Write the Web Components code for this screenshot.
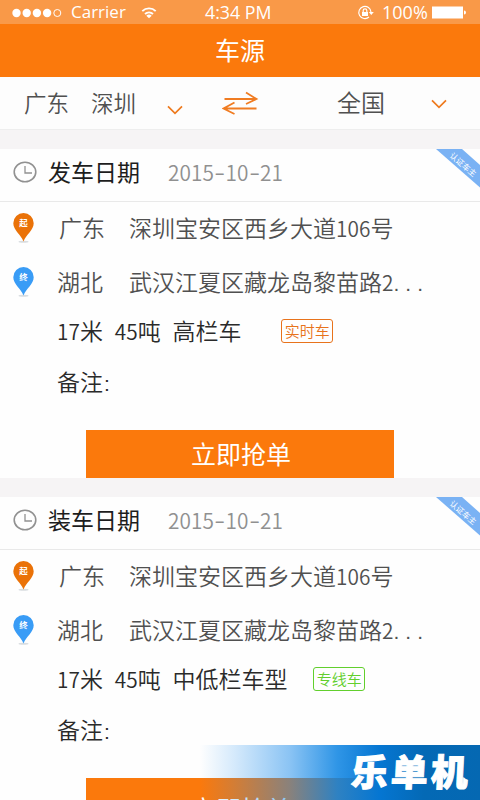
<!DOCTYPE html>
<html lang="zh-CN">
<head>
<meta charset="utf-8">
<title>车源</title>
<style>
html,body{margin:0;height:100%;overflow:hidden;background:#f6f5f6}
body{font-family:"Noto Sans CJK SC",sans-serif;font-weight:350;color:#505050}
</style>
</head>
<body>
<truck-app></truck-app>
<script>
const define = (name, render) => customElements.define(name, class extends HTMLElement {
  connectedCallback() {
    if (this.shadowRoot) return;
    this.attachShadow({mode: 'open'}).innerHTML = render(this);
  }
});

/* Text in which latin characters take half of a CJK cell. */
define('cell-text', el => {
  const html = el.getAttribute('value').replace(/\.\.\.|[0-9]+|-|:| /g, m =>
    m === '...' ? '<span class="dots">...</span>' :
    m === '-' ? '<span class="dash">-</span>' :
    m === ':' ? '<span class="colon">:</span>' :
    m === ' ' ? '<span class="sp"> </span>' : `<span class="n">${m}</span>`);
  return `<style>
  :host{display:block;white-space:pre;font-size:23px;line-height:34px;padding-bottom:2px}
  span{font-family:"Liberation Sans",sans-serif;font-size:21px;line-height:1}
  .n{font-family:"Noto Sans CJK SC",sans-serif;font-size:20.8px;letter-spacing:.1px}
  .dash{display:inline-block;width:11.4px;text-align:center;transform:scaleX(1.55) translateY(-1px)}
  .dots{letter-spacing:6px}
  .colon{padding-left:1px}
  .sp{letter-spacing:5.8px}
  </style>${html}`;
});

define('status-bar', () => `<style>
  :host{display:flex;flex:none;height:24px;box-sizing:border-box;align-items:center;background:#f99948;color:#fff;font:400 17px/24px "Open Sans",sans-serif;padding:0 11px 0 12px}
  svg,span{display:block;flex:none;white-space:nowrap}
  .carrier{margin-left:9px;width:70px}.wifi{width:64px}.time{width:152px;font-size:17.8px}
  .pct{margin-left:7px;width:48px;font-size:18px}
  </style>
  <svg width="50" height="24" fill="#fff"><circle cx="4.5" cy="13" r="4.2"/><circle cx="14.7" cy="13" r="4.2"/><circle cx="24.9" cy="13" r="4.2"/><circle cx="35.1" cy="13" r="4.2"/><circle cx="45.3" cy="13" r="3.5" fill="none" stroke="#fff"/></svg>
  <span class="carrier">Carrier</span>
  <svg class="wifi" width="64" height="24" viewBox="0 0 64 24" fill="none" stroke="#fff" stroke-width="1.9"><path d="M1.3 11.1a9.6 9.6 0 0 1 13.4 0M4 14a6 6 0 0 1 8 0"/><path d="M8 18.2 5.3 15.8a4 4 0 0 1 5.4 0Z" fill="#fff" stroke="none"/></svg>
  <span class="time">4:34 PM</span>
  <svg width="18" height="24" fill="none" stroke="#fff" stroke-width="1.2"><path d="M14 12.2A6.1 6.1 0 1 0 12 17"/><path d="M11.8 12h5l-2.5 3Z" fill="#fff" stroke="none"/><path d="M5 12h6v4H5z" fill="#fff" stroke="none"/><path d="M6.2 12v-1.4a1.8 1.8 0 0 1 3.6 0V12"/></svg>
  <span class="pct">100%</span>
  <svg width="36" height="24" fill="#fff"><rect x="2" y="6.5" width="31" height="12"/><path d="M34 10.5q2 0 2 2t-2 2z"/></svg>`);

define('title-bar', () => `<style>
  :host{display:flex;flex:none;height:53px;background:#fb790c;color:#fff;align-items:center;justify-content:center;font-size:25px;font-weight:400;line-height:36px;box-sizing:border-box;padding-bottom:4px}
  </style><slot></slot>`);

define('chevron-icon', () => `<style>:host{display:block}svg{display:block}</style>
  <svg width="16" height="10" fill="none" stroke="#ee7a1e" stroke-width="1.7"><path d="m1 1.3 7 7 7-7"/></svg>`);

define('filter-bar', () => `<style>
  :host{display:flex;flex:none;align-items:center;height:53px;box-sizing:border-box;background:#fdfdfd;border-bottom:1px solid #eeeeee;padding:0 32px 0 24px;font-size:22.5px;line-height:34px}
  span,svg,chevron-icon{flex:none}
  span{white-space:nowrap;padding-bottom:2px}.a{width:67px}.b{width:76px}.all{width:94px;font-size:24px}
  .c1{padding-top:14px;width:55px}.sw{display:block}.c2{padding-top:2px}
  </style>
  <span class="a">广东</span><span class="b">深圳</span><chevron-icon class="c1"></chevron-icon>
  <svg class="sw" width="115" height="26" viewBox="0 0 115 26" fill="none" stroke="#f07c22" stroke-width="1.8"><path d="M2.5 9H34.5M24 2.5 34.5 9 24 14M34.5 18.5H1.5M12.5 12.5 1.5 18.5l11 5.5"/></svg>
  <span class="all">全国</span><chevron-icon class="c2"></chevron-icon>`);

define('map-pin', el => `<style>:host{display:block;width:21px;height:30px}svg{display:block}text{font:bold 8.5px "Noto Sans CJK SC",sans-serif;fill:#fff}</style>
  <svg width="21" height="30"><ellipse cx="10.5" cy="28.7" rx="5" ry="1" fill="#d9dde0"/><path d="M10.5 28.5C8 22 .3 17 .3 10.3a10.2 10.2 0 0 1 20.4 0C20.7 17 13 22 10.5 28.5Z" fill="${el.getAttribute('color')}"/><text x="10.5" y="13.3" text-anchor="middle">${el.getAttribute('label')}</text></svg>`);

define('type-tag', el => `<style>
  :host{display:flex;box-sizing:border-box;width:52px;height:24px;align-items:center;justify-content:center;border:1.4px solid;border-radius:3px;font-size:15px;line-height:22px;color:${el.getAttribute('color')};white-space:nowrap}
  </style><slot></slot>`);

define('cert-ribbon', () => `<style>
  :host{position:absolute;right:0;top:0;width:44px;height:40px}
  svg{display:block}text{font:400 8px "Noto Sans CJK SC",sans-serif;fill:#fff}
  </style><svg width="44" height="40"><path d="M0 0H26L44 16V38.5Z" fill="#7ab2f4"/><text transform="translate(13 7.5) rotate(40.5)">认证车主</text></svg>`);

define('place-row', el => `<style>
  :host{display:flex;align-items:center;height:${el.getAttribute('h')}px;color:#505050}
  map-pin{margin-left:13px}.p{margin-left:${el.getAttribute('indent')}px;width:${95 - el.getAttribute('indent')}px}
  </style><map-pin color="${el.getAttribute('color')}" label="${el.getAttribute('label')}"></map-pin>
  <cell-text class="p" value="${el.getAttribute('province')}"></cell-text><cell-text value="${el.getAttribute('address')}"></cell-text>`);

define('order-card', el => `<style>
  :host{display:block;position:relative;height:329px;background:#fefefe;flex:none}
  .head{display:flex;align-items:center;height:52px;box-sizing:border-box;padding:0 0 6px 13px}
  .rule{height:1px;background:#e9e9e9}
  .head svg{display:block}.label{margin-left:11px;width:120px;color:#1d1d1d;font-weight:400}.date{color:#909090}
  .spec,.note{display:flex;align-items:center;color:#2a2a2a;padding-left:57px}
  .spec{height:42px}.note{height:60px}
  type-tag{margin-left:${el.getAttribute('gap')}px}
  .btn{box-sizing:border-box;margin:18px 0 0 86px;padding:0 0 2px 2px;width:308px;height:48px;background:#fb790c;color:#fff;display:flex;align-items:center;justify-content:center;font-size:25px;font-weight:400;line-height:36px}
  :host([low]) .btn{padding:12px 0 0 2px}
  </style>
  <div class="head"><svg width="24" height="24" fill="none" stroke="#919191" stroke-width="1.6"><ellipse cx="12" cy="12" rx="10.8" ry="9.8"/><path d="M12 6v7h7" stroke-width="1.3"/></svg>
  <cell-text class="label" value="${el.getAttribute('label')}"></cell-text><cell-text class="date" value="2015-10-21"></cell-text></div>
  <div class="rule"></div>
  <place-row h="52" indent="25" color="#ea7208" label="起" province="广东" address="深圳宝安区西乡大道106号"></place-row>
  <place-row h="56" indent="23" color="#399cf6" label="终" province="湖北" address="武汉江夏区藏龙岛黎苗路2..."></place-row>
  <div class="spec"><cell-text value="${el.getAttribute('spec')}"></cell-text><type-tag color="${el.getAttribute('color')}">${el.getAttribute('tag')}</type-tag></div>
  <div class="note"><cell-text value="备注:"></cell-text></div>
  <div class="btn">立即抢单</div>
  <cert-ribbon></cert-ribbon>`);

define('site-mark', () => `<style>
  :host{position:absolute;left:200px;right:0;bottom:0;height:55px;display:flex;align-items:center;justify-content:flex-end;box-sizing:border-box;padding:0 11px 0 0;background:linear-gradient(90deg,#2090f000 0,#2090f02e 12%,#198aea80 32%,#0b83e2d9 49%,#0576d2 64%,#0469b5 80%,#0568b2 100%)}
  span{font:900 37px/54px "Noto Sans CJK SC",sans-serif;color:#fff;letter-spacing:3px;margin-right:-2px;-webkit-text-stroke:1px #fff;transform:translateY(-3px) skewX(-3deg)}
  </style><span>乐单机</span>`);

define('truck-app', () => `<style>
  :host{display:flex;flex-direction:column;position:relative;width:480px;height:800px;overflow:hidden;background:#f6f4f5}
  .list{display:flex;flex:none;flex-direction:column;gap:19px;padding-top:19px}
  </style>
  <status-bar></status-bar><title-bar>车源</title-bar><filter-bar></filter-bar>
  <div class="list">
  <order-card label="发车日期" spec="17米 45吨 高栏车" tag="实时车" color="#e8731c" gap="40"></order-card>
  <order-card low label="装车日期" spec="17米 45吨 中低栏车型" tag="专线车" color="#62cf2d" gap="26"></order-card>
  </div><site-mark></site-mark>`);
</script>
</body>
</html>
